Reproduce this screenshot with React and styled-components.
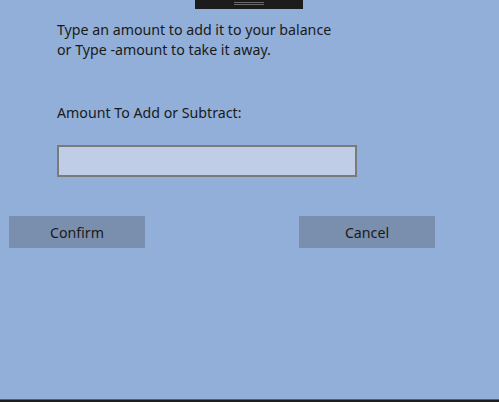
import React from "react";
import styled, { createGlobalStyle } from "styled-components";

const Global = createGlobalStyle`
  html, body { margin: 0; padding: 0; }
  body { background: #91afd8; font-family: "Noto Sans", "Open Sans", sans-serif; }
`;

const Window = styled.div`
  width: 499px;
  height: 402px;
  background: #91afd8;
  display: flex;
  flex-direction: column;
  overflow: hidden;
`;

const TopHandle = styled.div`
  margin-left: 195px;
  width: 108px;
  height: 9px;
  background: #1c1c1c;
  display: flex;
  flex-direction: column;
  align-items: center;
  padding-top: 2px;
  box-sizing: border-box;
  gap: 1px;
`;

const GripLine = styled.div`
  width: 30px;
  height: 1px;
  background: #6a6a6a;
`;

const Content = styled.div`
  flex: 1;
  display: flex;
  flex-direction: column;
`;

const Instructions = styled.p`
  margin: 11px 0 0 57px;
  font-size: 14.2px;
  line-height: 20px;
  color: #1a1a1a;
`;

const Label = styled.div`
  margin: 43px 0 0 57px;
  font-size: 14.2px;
  line-height: 20px;
  color: #1a1a1a;
`;

const AmountInput = styled.input`
  margin: 22px 0 0 57px;
  width: 300px;
  height: 32px;
  box-sizing: border-box;
  border: 2px solid #7a7a7a;
  background: #bfcee6;
  outline: none;
  font: inherit;
  font-size: 14px;
`;

const ButtonRow = styled.div`
  display: flex;
  gap: 154px;
  padding-left: 9px;
  margin-top: 39px;
`;

const ActionButton = styled.button`
  width: 136px;
  height: 32px;
  border: none;
  background: #7a8fae;
  color: #1a1a1a;
  font-family: inherit;
  font-size: 14.2px;
  padding: 0;
`;

const BottomEdge = styled.div`
  height: 3px;
  border-top: 1px solid #2b6c9c;
  background: #1e1e1e;
  box-sizing: border-box;
`;

export default function App() {
  return (
    <>
      <Global />
      <Window>
        <TopHandle>
          <GripLine />
          <GripLine />
        </TopHandle>
        <Content>
          <Instructions>
            Type an amount to add it to your balance
            <br />
            or Type -amount to take it away.
          </Instructions>
          <Label>Amount To Add or Subtract:</Label>
          <AmountInput type="text" />
          <ButtonRow>
            <ActionButton>Confirm</ActionButton>
            <ActionButton>Cancel</ActionButton>
          </ButtonRow>
        </Content>
        <BottomEdge />
      </Window>
    </>
  );
}
